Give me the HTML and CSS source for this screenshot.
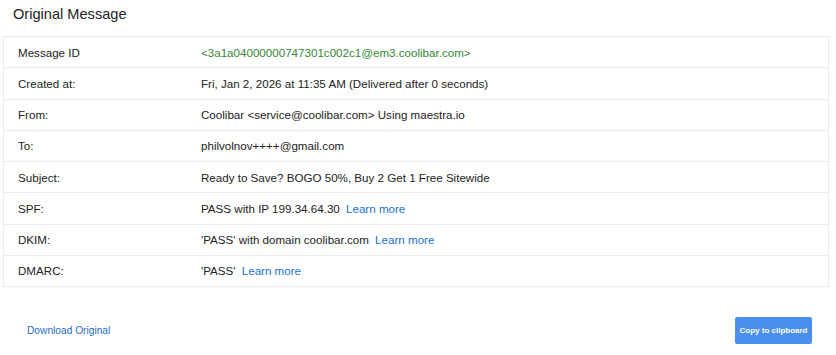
FILE: index.html
```html
<!DOCTYPE html>
<html lang="en">
<head>
    <meta charset="UTF-8">
    <title>Original Message</title>
    <link rel="stylesheet" href="styles.css">
</head>
<body>
    <h1 class="title">Original Message</h1>

    <table class="details">
        <tr>
            <td class="label">Message ID</td>
            <td class="value msgid">&lt;3a1a04000000747301c002c1@em3.coolibar.com&gt;</td>
        </tr>
        <tr>
            <td class="label">Created at:</td>
            <td class="value">Fri, Jan 2, 2026 at 11:35 AM (Delivered after 0 seconds)</td>
        </tr>
        <tr>
            <td class="label">From:</td>
            <td class="value">Coolibar &lt;service@coolibar.com&gt; Using maestra.io</td>
        </tr>
        <tr>
            <td class="label">To:</td>
            <td class="value">philvolnov++++@gmail.com</td>
        </tr>
        <tr>
            <td class="label">Subject:</td>
            <td class="value">Ready to Save? BOGO 50%, Buy 2 Get 1 Free Sitewide</td>
        </tr>
        <tr>
            <td class="label">SPF:</td>
            <td class="value">PASS with IP 199.34.64.30 <a href="#" class="learn">Learn more</a></td>
        </tr>
        <tr>
            <td class="label">DKIM:</td>
            <td class="value">'PASS' with domain coolibar.com <a href="#" class="learn">Learn more</a></td>
        </tr>
        <tr>
            <td class="label">DMARC:</td>
            <td class="value">'PASS' <a href="#" class="learn">Learn more</a></td>
        </tr>
    </table>

    <div class="footer">
        <a href="#" class="download">Download Original</a>
        <button class="copy">Copy to clipboard</button>
    </div>
</body>
</html>
```

FILE: styles.css
```css
body {
    margin: 0;
    padding: 0 7px 0 3px;
    font-family: Arial, "Liberation Sans", sans-serif;
    color: #222;
    background: #fff;
}
.title {
    margin: 0;
    padding: 6px 10px 0;
    height: 36px;
    box-sizing: border-box;
    font-size: 14.6px;
    font-weight: normal;
    color: #222;
}
.details {
    width: 100%;
    border-collapse: collapse;
    border: 1px solid #ebebeb;
    font-size: 11.6px;
}
.details tr {
    border-bottom: 1px solid #ebebeb;
}
.details td {
    height: 30.25px;
    padding: 0;
    vertical-align: middle;
}
.label {
    width: 183px;
    padding-left: 14px !important;
    color: #222;
}
.msgid {
    color: #34873a;
}
.learn {
    color: #1a6fd0;
    text-decoration: none;
    margin-left: 3px;
}
.footer {
    display: flex;
    justify-content: space-between;
    align-items: center;
    padding: 30px 17px 0 24px;
}
.download {
    font-size: 10.2px;
    color: #2a6ac8;
    text-decoration: none;
}
.copy {
    width: 77px;
    height: 27px;
    padding: 0;
    border: none;
    border-radius: 2px;
    background: #4a8ff0;
    color: #fff;
    font-family: Arial, "Liberation Sans", sans-serif;
    font-size: 8px;
    font-weight: bold;
    cursor: pointer;
}
```
